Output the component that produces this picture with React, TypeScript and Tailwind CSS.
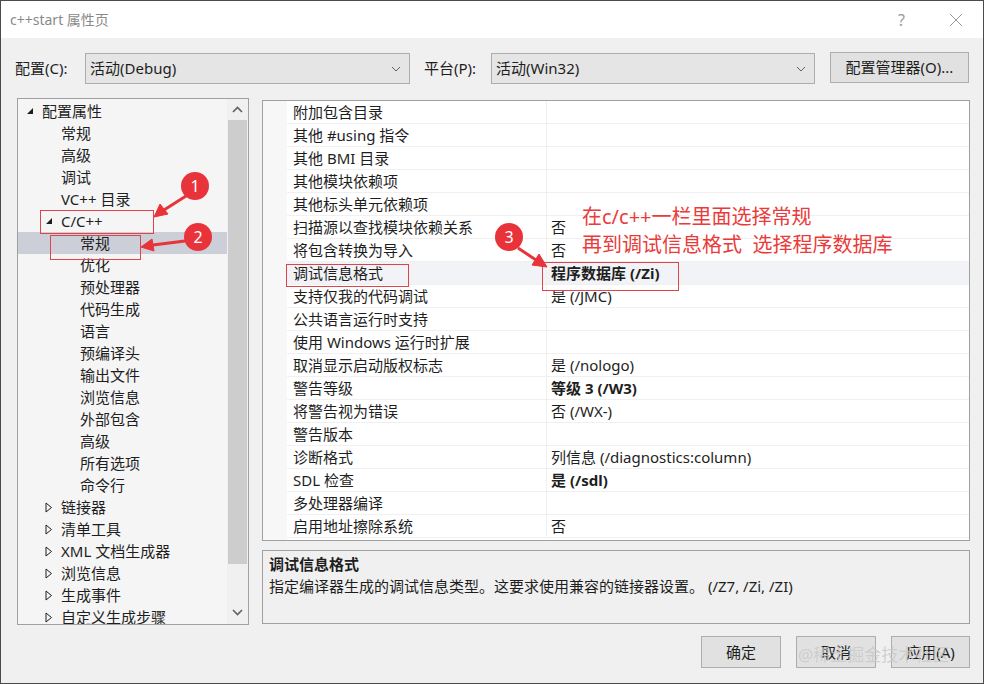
import {JSX} from "react";

type TreeItem = {label: string; level: number; arrow?: "open" | "closed"; selected?: boolean};

const treeItems: TreeItem[] = [
    {label: "配置属性", level: 0, arrow: "open"},
    {label: "常规", level: 1},
    {label: "高级", level: 1},
    {label: "调试", level: 1},
    {label: "VC++ 目录", level: 1},
    {label: "C/C++", level: 1, arrow: "open"},
    {label: "常规", level: 2, selected: true},
    {label: "优化", level: 2},
    {label: "预处理器", level: 2},
    {label: "代码生成", level: 2},
    {label: "语言", level: 2},
    {label: "预编译头", level: 2},
    {label: "输出文件", level: 2},
    {label: "浏览信息", level: 2},
    {label: "外部包含", level: 2},
    {label: "高级", level: 2},
    {label: "所有选项", level: 2},
    {label: "命令行", level: 2},
    {label: "链接器", level: 1, arrow: "closed"},
    {label: "清单工具", level: 1, arrow: "closed"},
    {label: "XML 文档生成器", level: 1, arrow: "closed"},
    {label: "浏览信息", level: 1, arrow: "closed"},
    {label: "生成事件", level: 1, arrow: "closed"},
    {label: "自定义生成步骤", level: 1, arrow: "closed"},
];

const props: {name: string; value: string; bold?: boolean; active?: boolean}[] = [
    {name: "附加包含目录", value: ""},
    {name: "其他 #using 指令", value: ""},
    {name: "其他 BMI 目录", value: ""},
    {name: "其他模块依赖项", value: ""},
    {name: "其他标头单元依赖项", value: ""},
    {name: "扫描源以查找模块依赖关系", value: "否"},
    {name: "将包含转换为导入", value: "否"},
    {name: "调试信息格式", value: "程序数据库 (/Zi)", bold: true, active: true},
    {name: "支持仅我的代码调试", value: "是 (/JMC)"},
    {name: "公共语言运行时支持", value: ""},
    {name: "使用 Windows 运行时扩展", value: ""},
    {name: "取消显示启动版权标志", value: "是 (/nologo)"},
    {name: "警告等级", value: "等级 3 (/W3)", bold: true},
    {name: "将警告视为错误", value: "否 (/WX-)"},
    {name: "警告版本", value: ""},
    {name: "诊断格式", value: "列信息 (/diagnostics:column)"},
    {name: "SDL 检查", value: "是 (/sdl)", bold: true},
    {name: "多处理器编译", value: ""},
    {name: "启用地址擦除系统", value: "否"},
];

function Chevron(): JSX.Element {
    return (
        <svg width="10" height="6" viewBox="0 0 10 6" className="text-[#606060]">
            <path d="M1 1 L5 5 L9 1" fill="none" stroke="currentColor" strokeWidth="1"/>
        </svg>
    );
}

function Combo({text, width}: {text: string; width: string}): JSX.Element {
    return (
        <div className={`${width} h-[31px] bg-[#e5e5e5] border border-[#adadad] flex items-center justify-between pl-[4px] pr-[8px]`}>
            <span>{text}</span>
            <Chevron/>
        </div>
    );
}

function TreeArrow({kind}: {kind?: "open" | "closed"}): JSX.Element {
    return (
        <span className="w-[16px] h-[22px] flex items-center">
            {kind === "open" ? (
                <svg width="8" height="8" viewBox="0 0 8 8"><path d="M7 1 L7 7 L1 7 Z" fill="#1e1e1e"/></svg>
            ) : kind === "closed" ? (
                <svg width="8" height="11" viewBox="0 0 8 11"><path d="M1 1 L6.5 5.5 L1 10 Z" fill="none" stroke="#1e1e1e" strokeWidth="1"/></svg>
            ) : null}
        </span>
    );
}

export default function App(): JSX.Element {
    return (
        <div className="relative w-[984px] h-[684px] border border-[#4a4a4a] flex flex-col overflow-hidden text-[15px] text-[#1e1e1e] font-['Noto_Sans',_'Noto_Sans_CJK_SC',_sans-serif]">
            {/* title bar */}
            <div className="h-[37px] shrink-0 bg-white flex items-center justify-between pl-[9px] pr-[20px]">
                <span className="text-[14px] text-[#8a8a8a]">c++start 属性页</span>
                <div className="flex items-center gap-[44px] text-[#9a9a9a]">
                    <span className="text-[16px]">?</span>
                    <svg width="14" height="14" viewBox="0 0 14 14"><path d="M1 1 L13 13 M13 1 L1 13" stroke="currentColor" strokeWidth="1"/></svg>
                </div>
            </div>

            <div className="flex-1 bg-[#f0f0f0] flex flex-col">
                {/* config row */}
                <div className="flex items-center mt-[15px] pl-[14px] h-[31px]">
                    <span className="w-[70px]">配置(C):</span>
                    <Combo text="活动(Debug)" width="w-[325px]"/>
                    <span className="w-[67px] ml-[14px]">平台(P):</span>
                    <Combo text="活动(Win32)" width="w-[324px]"/>
                    <button className="ml-[15px] w-[139px] h-[31px] bg-[#e1e1e1] border border-[#adadad] -mt-[2px]">配置管理器(O)...</button>
                </div>

                <div className="flex mt-[14px] pl-[16px]">
                    {/* tree */}
                    <div className="w-[232px] h-[527px] border border-[#a0a0a0] bg-[#f5f5f5] flex overflow-hidden">
                        <div className="flex-1 pt-[1px] overflow-hidden">
                            {treeItems.map((item, i) => (
                                <div key={i}
                                     className={`h-[22px] flex items-center leading-[22px] whitespace-nowrap ${item.selected ? "bg-[#cccfd8]" : ""} ${item.level === 0 ? "pl-[8px]" : item.level === 1 ? "pl-[27px]" : "pl-[46px]"}`}>
                                    <TreeArrow kind={item.arrow}/>
                                    <span>{item.label}</span>
                                </div>
                            ))}
                        </div>
                        <div className="w-[21px] flex flex-col items-center bg-[#f0f0f0]">
                            <div className="h-[21px] flex items-center justify-center">
                                <svg width="11" height="7" viewBox="0 0 11 7"><path d="M1 6 L5.5 1.5 L10 6" fill="none" stroke="#606060" strokeWidth="1.6"/></svg>
                            </div>
                            <div className="w-[19px] h-[444px] bg-[#cdcdcd]"/>
                            <div className="flex-1 flex items-end pb-[8px]">
                                <svg width="11" height="7" viewBox="0 0 11 7"><path d="M1 1 L5.5 5.5 L10 1" fill="none" stroke="#606060" strokeWidth="1.6"/></svg>
                            </div>
                        </div>
                    </div>

                    {/* right side */}
                    <div className="ml-[13px] w-[708px] flex flex-col mt-[2px]">
                        <div className="h-[441px] border border-[#a0a0a0] bg-white flex overflow-hidden">
                            <div className="w-[24px] bg-[#f7f7f7]"/>
                            <div className="flex-1">
                                {props.map((p, i) => (
                                    <div key={i} className={`h-[23px] flex border-b border-[#f0f0f0] ${p.active ? "bg-[#f2f3f7]" : ""}`}>
                                        <div className="w-[260px] pl-[6px] flex items-center border-r border-[#f0f0f0] whitespace-nowrap">{p.name}</div>
                                        <div className={`flex-1 pl-[4px] flex items-center whitespace-nowrap ${p.bold ? "font-bold" : ""}`}>{p.value}</div>
                                    </div>
                                ))}
                            </div>
                        </div>
                        <div className="mt-[9px] h-[74px] border border-[#a0a0a0] bg-[#f0f0f0] px-[6px] pt-[2px]">
                            <div className="font-bold leading-[22px]">调试信息格式</div>
                            <div className="leading-[22px]">指定编译器生成的调试信息类型。这要求使用兼容的链接器设置。 (/Z7, /Zi, /ZI)</div>
                        </div>
                        <div className="flex justify-end gap-[15px] mt-[12px]">
                            <button className="w-[80px] h-[32px] bg-[#e1e1e1] border border-[#adadad]">确定</button>
                            <button className="w-[80px] h-[32px] bg-[#e1e1e1] border border-[#adadad]">取消</button>
                            <button className="w-[79px] h-[32px] bg-[#e1e1e1] border border-[#adadad]">应用(A)</button>
                        </div>
                    </div>
                </div>
            </div>

            {/* annotations */}
            <div className="absolute left-[39px] top-[209px] w-[114px] h-[24px] border-[1.5px] border-[#e0434a]"/>
            <div className="absolute left-[49px] top-[234px] w-[91px] h-[25px] border-[1.5px] border-[#e0434a]"/>
            <div className="absolute left-[285px] top-[263px] w-[123px] h-[23px] border-[1.5px] border-[#e0434a]"/>
            <div className="absolute left-[541px] top-[261px] w-[137px] h-[29px] border-[1.5px] border-[#e0434a]"/>

            <svg className="absolute left-0 top-0 pointer-events-none" width="984" height="684">
                <g fill="#e8333b" stroke="#e8333b">
                    <path d="M185 195 L163 209" strokeWidth="3"/>
                    <path d="M153 216 L159 203 L167 213 Z"/>
                    <path d="M184 240 L152 244" strokeWidth="3"/>
                    <path d="M140 246 L151 238 L153 250 Z"/>
                    <path d="M517 247 L535 259" strokeWidth="3"/>
                    <path d="M546 266 L531 264 L538 253 Z"/>
                </g>
            </svg>
            {[
                {n: "1", cls: "left-[180px] top-[171px]"},
                {n: "2", cls: "left-[183px] top-[222px]"},
                {n: "3", cls: "left-[494px] top-[222px]"},
            ].map((c) => (
                <div key={c.n} className={`absolute ${c.cls} w-[28px] h-[28px] rounded-full bg-[#e8333b] text-white text-[16px] flex items-center justify-center leading-none`}>{c.n}</div>
            ))}

            <div className="absolute left-[581px] top-[202px] text-[20px] leading-[28px] text-[#ea3b3b] whitespace-pre">
                <div>在c/c++一栏里面选择常规</div>
                <div>再到调试信息格式  选择程序数据库</div>
            </div>

            <div className="absolute left-[797px] top-[641px] text-[17px] text-[#c8c8c8]/80 whitespace-nowrap">@稀土掘金技术社区</div>
        </div>
    );
}
